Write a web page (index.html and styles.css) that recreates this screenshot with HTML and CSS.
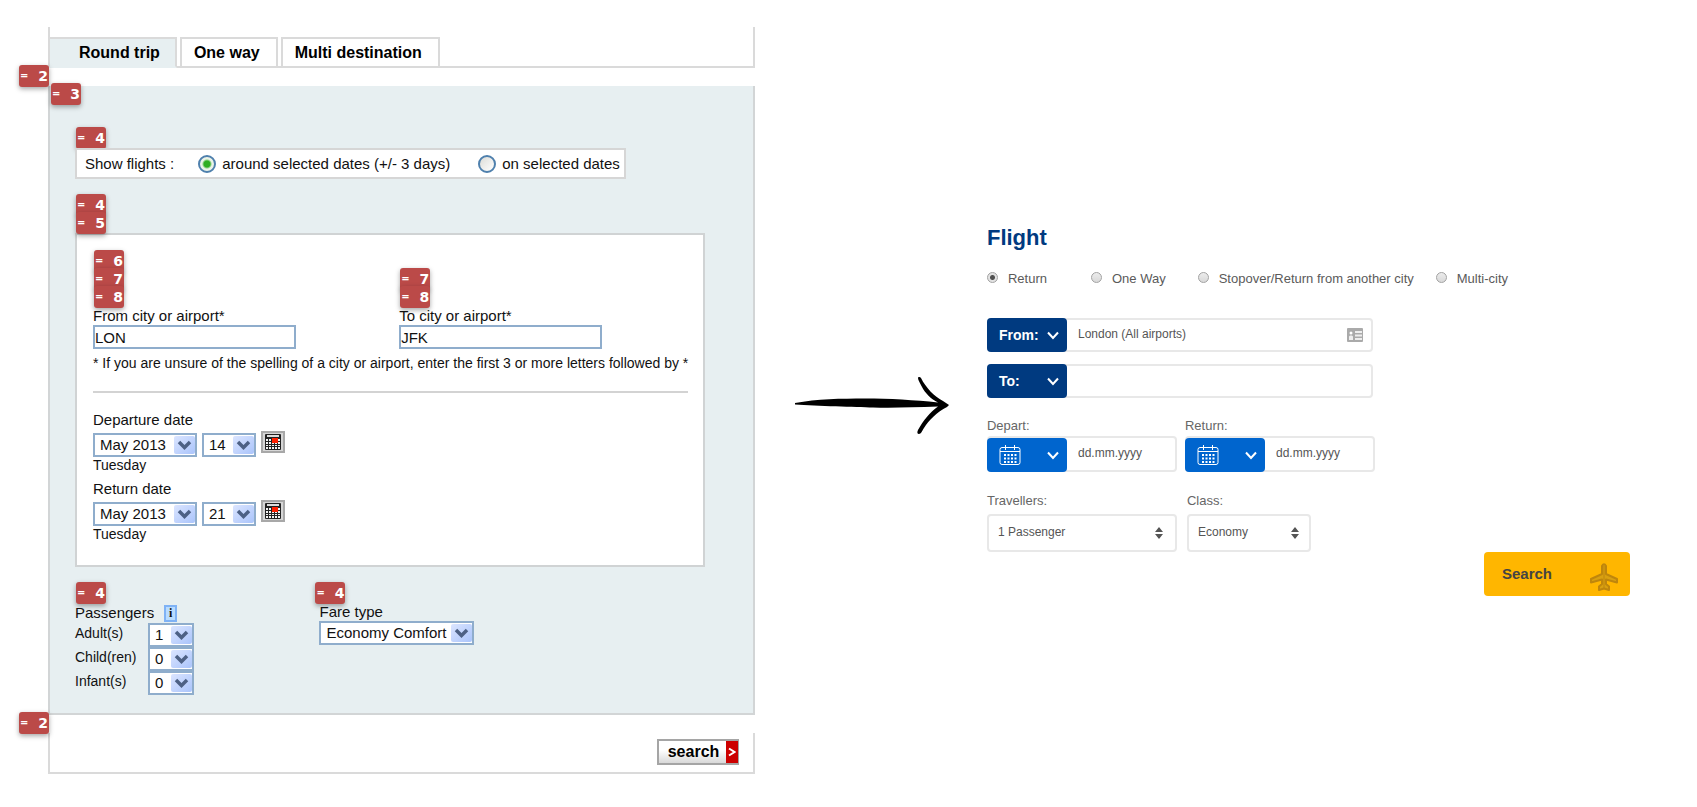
FILE: index.html
```
<!DOCTYPE html>
<html lang="en">
<head>
<meta charset="utf-8">
<title>Flight search forms</title>
<link rel="stylesheet" href="styles.css">
</head>
<body>
<svg class="defs" aria-hidden="true">
  <symbol id="old-cal" viewBox="0 0 18 18">
    <rect x="1" y="1" width="16" height="16" rx="1" fill="#222"/>
    <rect x="3" y="2" width="12" height="2" fill="#ddd"/>
    <g fill="#f4f4f4">
      <path d="M2 6h2v2H2zM5 6h2v2H5zM2 9h2v2H2zM5 9h2v2H5zM8 9h2v2H8zM11 9h2v2h-2zM2 12h2v1H2zM5 12h2v1H5zM8 12h2v1H8zM11 12h2v1h-2zM14 12h2v1h-2zM2 14h2v2H2zM5 14h2v2H5zM8 14h2v2H8zM11 14h2v2h-2zM14 14h2v2h-2zM14 9h2v2h-2zM14 6h2v2h-2z"/>
    </g>
    <rect x="8" y="5" width="6" height="5" fill="#ff2000"/>
  </symbol>
  <symbol id="new-cal" viewBox="0 0 22 22">
    <g fill="none" stroke="#fff" stroke-width="1">
      <rect x="1" y="3.500" width="20" height="17" rx="2"/>
      <path d="M1 7.500h20M6.500 1v5M15.500 1v5"/>
    </g>
    <g stroke="#fff" stroke-width="2" stroke-dasharray="2 1.500">
      <path d="M5 11h13M5 14.500h13M5 18h13"/>
    </g>
  </symbol>
  <symbol id="chevron" viewBox="0 0 12 9">
    <path d="M1 1.500l5 5.500 5-5.500" fill="none" stroke="#fff" stroke-width="2"/>
  </symbol>
</svg>

<main class="page">
  <form class="old">
    <div class="old-head">
      <div class="tabs">
        <button type="button" class="tab tab-on">Round trip</button>
        <button type="button" class="tab">One way</button>
        <button type="button" class="tab">Multi destination</button>
      </div>
    </div>
    <div class="tags tags-out"><span class="tag"><i>=</i><b>2</b></span></div>
    <div class="old-panel">
      <div class="tags"><span class="tag"><i>=</i><b>3</b></span></div>
      <div class="old-body">
        <div class="tags"><span class="tag"><i>=</i><b>4</b></span></div>
        <div class="show" role="radiogroup" aria-label="Show flights">
          <span class="show-title">Show flights :</span>
          <label class="show-opt"><input type="radio" class="xp-radio" name="show" checked><span>around selected dates (+/- 3 days)</span></label>
          <label class="show-opt"><input type="radio" class="xp-radio" name="show"><span>on selected dates</span></label>
        </div>
        <div class="tags second"><span class="tag"><i>=</i><b>4</b></span><span class="tag"><i>=</i><b>5</b></span></div>
        <div class="trip">
          <div class="cities">
            <div class="city">
              <div class="tags"><span class="tag"><i>=</i><b>6</b></span><span class="tag"><i>=</i><b>7</b></span><span class="tag"><i>=</i><b>8</b></span></div>
              <label class="line" for="o-from">From city or airport*</label>
              <input class="xp-input" id="o-from" type="text" value="LON">
            </div>
            <div class="city">
              <div class="tags"><span class="tag"><i>=</i><b>7</b></span><span class="tag"><i>=</i><b>8</b></span></div>
              <label class="line" for="o-to">To city or airport*</label>
              <input class="xp-input" id="o-to" type="text" value="JFK">
            </div>
          </div>
          <p class="hint">* If you are unsure of the spelling of a city or airport, enter the first 3 or more letters followed by *</p>
          <hr class="rule">
          <div class="date">
            <label class="line" for="o-dep">Departure date</label>
            <div class="date-row">
              <select class="xp-select month" id="o-dep"><option>May 2013</option></select>
              <select class="xp-select day" aria-label="Departure day"><option>14</option></select>
              <button type="button" class="cal-btn" aria-label="Pick departure date"><svg class="cal-ico"><use href="#old-cal"/></svg></button>
            </div>
            <div class="weekday">Tuesday</div>
          </div>
          <div class="date">
            <label class="line" for="o-ret">Return date</label>
            <div class="date-row">
              <select class="xp-select month" id="o-ret"><option>May 2013</option></select>
              <select class="xp-select day" aria-label="Return day"><option>21</option></select>
              <button type="button" class="cal-btn" aria-label="Pick return date"><svg class="cal-ico"><use href="#old-cal"/></svg></button>
            </div>
            <div class="weekday">Tuesday</div>
          </div>
        </div>
        <div class="extras">
          <div class="pax">
            <div class="tags"><span class="tag"><i>=</i><b>4</b></span></div>
            <div class="pax-title">Passengers <button type="button" class="info" aria-label="Passenger information">i</button></div>
            <div class="pax-row"><label for="o-ad">Adult(s)</label><select class="xp-select count" id="o-ad"><option>1</option></select></div>
            <div class="pax-row"><label for="o-ch">Child(ren)</label><select class="xp-select count" id="o-ch"><option>0</option></select></div>
            <div class="pax-row"><label for="o-in">Infant(s)</label><select class="xp-select count" id="o-in"><option>0</option></select></div>
          </div>
          <div class="fare">
            <div class="tags"><span class="tag"><i>=</i><b>4</b></span></div>
            <div class="fare-field">
              <label class="line" for="o-fare">Fare type</label>
              <select class="xp-select fare-select" id="o-fare"><option>Economy Comfort</option></select>
            </div>
          </div>
        </div>
      </div>
    </div>
    <div class="tags tags-out"><span class="tag"><i>=</i><b>2</b></span></div>
    <div class="old-foot">
      <button type="button" class="old-search"><span class="old-search-text">search</span><span class="old-search-go"><svg viewBox="0 0 8 10" width="8" height="10" aria-hidden="true"><path d="M1 1.500l5.500 3.500L1 8.500" fill="none" stroke="#fff" stroke-width="2"/></svg></span></button>
    </div>
  </form>

  <svg class="arrow" viewBox="0 0 154 58" aria-hidden="true">
    <path d="M0 26C22 22 46 21.500 70 21.500S120 23 143 25.500C136 22 130 16 127 10 125 6 123 3 123 1 123 0 125-.5 126 1 131 11 139 19 148 24L154 28 152 30C142 35 134 43 129 51 127 54 126 57 124 57 122 57 122 55 123 53 128 44 135 35 143 29.500 118 30.500 95 31 78 30.500S22 29 0 27.500Z"/>
  </svg>

  <form class="new">
    <h1 class="title">Flight</h1>
    <div class="kinds" role="radiogroup" aria-label="Trip type">
      <label class="kind kind-first"><input type="radio" class="mac-radio" name="kind" checked><span>Return</span></label>
      <label class="kind kind-second"><input type="radio" class="mac-radio" name="kind"><span>One Way</span></label>
      <label class="kind kind-third"><input type="radio" class="mac-radio" name="kind"><span>Stopover/Return from another city</span></label>
      <label class="kind"><input type="radio" class="mac-radio" name="kind"><span>Multi-city</span></label>
    </div>
    <div class="place">
      <button type="button" class="place-btn">From: <svg class="chev"><use href="#chevron"/></svg></button>
      <input class="plain" type="text" aria-label="From" value="London (All airports)">
      <svg class="card-ico" viewBox="0 0 16 14" aria-hidden="true">
        <rect width="16" height="14" rx="1" fill="#aaa"/>
        <path d="M2 12V8.500l1-1h2l1 1V12zM8 3h7v2H8zM8 6.500h7v2H8zM8 10h7v2H8z" fill="#eee"/>
        <circle cx="4" cy="5" r="1.500" fill="#fff"/>
      </svg>
    </div>
    <div class="place">
      <button type="button" class="place-btn">To: <svg class="chev"><use href="#chevron"/></svg></button>
      <input class="plain" type="text" aria-label="To">
    </div>
    <div class="pair pair-dates">
      <div class="field">
        <label class="cap" for="n-dep">Depart:</label>
        <div class="when">
          <button type="button" class="when-btn" aria-label="Choose departure"><svg class="new-cal"><use href="#new-cal"/></svg><svg class="chev"><use href="#chevron"/></svg></button>
          <input class="plain" id="n-dep" type="text" placeholder="dd.mm.yyyy">
        </div>
      </div>
      <div class="field">
        <label class="cap" for="n-ret">Return:</label>
        <div class="when">
          <button type="button" class="when-btn" aria-label="Choose return"><svg class="new-cal"><use href="#new-cal"/></svg><svg class="chev"><use href="#chevron"/></svg></button>
          <input class="plain" id="n-ret" type="text" placeholder="dd.mm.yyyy">
        </div>
      </div>
    </div>
    <div class="pair pair-opts">
      <div class="field">
        <label class="cap" for="n-trav">Travellers:</label>
        <select class="mac-select wide" id="n-trav"><option>1 Passenger</option></select>
      </div>
      <div class="field">
        <label class="cap" for="n-class">Class:</label>
        <select class="mac-select" id="n-class"><option>Economy</option></select>
      </div>
    </div>
    <button type="button" class="new-search">Search
      <svg class="plane" viewBox="0 0 28 28" aria-hidden="true">
        <path d="M12 3q2-3.500 4 0v8l11 5v3.500L16 16.500V21l3 2.500V27l-5-1.500L9 27v-3.500l3-2.500v-4.500L1 19.500V16l11-5z" fill="#d9a010" stroke="#bf860c" stroke-width="2" stroke-linejoin="round"/>
        <path d="M14 3v22" stroke="#bf860c" stroke-width="1"/>
      </svg>
    </button>
  </form>
</main>
</body>
</html>
```

FILE: styles.css
```
* { box-sizing: border-box; }

body {
  margin: 0;
  background: #fff;
  color: #111;
  font-family: "Liberation Sans", Arial, sans-serif;
  font-size: 15px;
  line-height: 18px;
}

button, input, select {
  font: inherit;
  color: inherit;
  margin: 0;
}

.defs { position: absolute; width: 0; height: 0; }

.page {
  display: grid;
  grid-template-columns: 706fr 230fr 646fr;
  align-items: start;
  padding: 27px 67px 32px 48px;
}

/* Numbered tags */
.tags { display: flex; flex-direction: column; align-items: flex-start; }
.tags-out { margin-left: -30px; }
.tags.second { margin-top: 18px; }
.tag {
  display: flex;
  justify-content: space-between;
  align-items: center;
  width: 30px;
  height: 22px;
  margin: -3px 0 -1px 1px;
  padding: 0 1px;
  border-radius: 3px;
  background: #bb4a48;
  box-shadow: 0 2px 5px rgba(0, 0, 0, .35);
  color: #fff;
  font-family: "DejaVu Sans", sans-serif;
}
.tag i { font-style: normal; font-weight: bold; font-size: 10px; }
.tag b { font-size: 14px; }

/* Classic form */
.old-head {
  padding-top: 10px;
  border: solid #dadada;
  border-width: 0 2px 2px;
}
.tabs { display: flex; gap: 3px; margin: 0 0 -2px -2px; }
.tab {
  padding: 5px 16px 5px 12px;
  height: 31px;
  border: 2px solid #dadada;
  background: #fff;
  color: #000;
  font-size: 16px;
  font-weight: bold;
}
.tab-on { padding-left: 29px; padding-right: 15px; background: #e7eff1; border-bottom-color: #e7eff1; }

.old-panel {
  background: #e7eff1;
  border: solid #d2d5d6;
  border-width: 0 2px 2px;
}
.old-body { padding: 26px 48px 18px 25px; }

.show {
  display: inline-flex;
  align-items: center;
  height: 31px;
  padding: 0 4px 0 8px;
  border: 2px solid #d6d6d6;
  background: #fff;
}
.show-title { margin-right: 24px; }
.show-opt { display: flex; align-items: center; gap: 6px; }
.show-opt + .show-opt { margin-left: 28px; }
.xp-radio {
  appearance: none;
  width: 18px;
  height: 18px;
  border: 2px solid #4f80ad;
  border-radius: 50%;
  background: linear-gradient(135deg, #dcdcd7, #fff);
}
.xp-radio:checked {
  background: radial-gradient(circle, #2fae22 0 3px, #e9f3e6 5px, #f4f4f0);
}

.trip {
  padding: 18px 15px 22px 16px;
  border: 2px solid #d0d3d4;
  background: #fff;
}
.cities { display: grid; grid-template-columns: 306fr 289fr; align-items: end; }
.city { display: flex; flex-direction: column; }
.line { display: block; height: 18px; }
.xp-input {
  width: 100%;
  max-width: 203px;
  height: 24px;
  padding: 0;
  border: 2px solid #8fadcc;
  background: #fff;
}
.hint { margin: 5px 0 19px; font-size: 14px; white-space: nowrap; }
.rule { margin: 0 0 18px; border: 0; border-top: 2px solid #d3d3d3; }
.date + .date { margin-top: 6px; }
.date-row { display: flex; align-items: flex-end; gap: 5px; margin-top: 2px; }
.weekday { font-size: 14px; line-height: 17px; }

.xp-select {
  appearance: none;
  height: 24px;
  padding: 0 0 0 5px;
  border: 2px solid #8fadcc;
  border-radius: 0;
  background: #fff url("data:image/svg+xml,%3Csvg xmlns='http://www.w3.org/2000/svg' width='21' height='18'%3E%3Cdefs%3E%3ClinearGradient id='g' x2='1' y2='1'%3E%3Cstop stop-color='%23dbe5ff'/%3E%3Cstop offset='1' stop-color='%23aac4fb'/%3E%3C/linearGradient%3E%3C/defs%3E%3Crect width='21' height='18' rx='2' fill='url(%23g)'/%3E%3Cpath d='M5 6l5.500 5.500L16 6' fill='none' stroke='%234d6185' stroke-width='3.500'/%3E%3C/svg%3E") no-repeat right center;
}
.month { width: 104px; }
.day { width: 54px; }
.count { width: 46px; }
.fare-select { display: block; width: 155px; }

.cal-btn {
  display: flex;
  align-items: center;
  justify-content: center;
  width: 24px;
  height: 22px;
  margin-bottom: 4px;
  padding: 0;
  border: 2px solid #a8a8a8;
  background: #d6d6d6;
}
.cal-ico { width: 18px; height: 18px; }

.extras { display: grid; grid-template-columns: 239fr 390fr; margin-top: 18px; align-items: start; }
.pax-title { display: flex; align-items: center; gap: 10px; height: 20px; }
.info {
  width: 13px;
  height: 17px;
  padding: 0;
  border: 2px solid #7fb2f5;
  background: #b9dcff;
  color: #111;
  font: bold 12px/12px "Liberation Serif", serif;
}
.pax-row { display: grid; grid-template-columns: 73px auto; justify-content: start; height: 24px; }
.pax-row label { font-size: 14px; line-height: 20px; }
.fare-field { padding-left: 5px; }

.old-foot {
  display: flex;
  justify-content: flex-end;
  padding: 6px 14px 7px;
  border: solid #dadada;
  border-width: 0 2px 2px;
}
.old-search {
  display: flex;
  height: 26px;
  padding: 0;
  border: 2px solid #a5a5a5;
  border-right-width: 1px;
  background: linear-gradient(#fff 40%, #d9d9d9);
  color: #000;
  font-size: 16px;
  font-weight: bold;
}
.old-search-text { padding: 2px 7px 2px 9px; }
.old-search-go { display: flex; align-items: center; padding: 0 2px; align-self: stretch; background: #c00; }

.arrow { width: 154px; height: 58px; margin: 350px 0 0 40px; overflow: visible; }

/* Modern form */
.new {
  display: flex;
  flex-direction: column;
  padding: 198px 0 0 2px;
  color: #5a5a5a;
  font-size: 13px;
}
.title { margin: 0 0 18px; color: #003a80; font-size: 22px; line-height: 26px; }
.kinds { display: flex; margin-bottom: 29px; height: 20px; }
.kind { display: flex; gap: 10px; line-height: 20px; }
.kind-first { margin-right: 44px; }
.kind-second { margin-right: 32px; }
.kind-third { margin-right: 22px; }
.mac-radio {
  appearance: none;
  width: 11px;
  height: 11px;
  margin-top: 3px;
  border: 1px solid #a2a2a2;
  border-radius: 50%;
  background: linear-gradient(#ececec, #d8d8d8);
}
.mac-radio:checked { background: radial-gradient(circle, #505050 0 2px, #e2e2e2 3px); }

.place, .when {
  display: flex;
  align-items: center;
  height: 34px;
  border: 2px solid #e8e8e8;
  border-radius: 4px;
}
.when { height: 36px; }
.place { width: 100%; max-width: 386px; margin-bottom: 12px; }
.place-btn, .when-btn {
  display: flex;
  justify-content: space-between;
  align-items: center;
  flex: none;
  width: 80px;
  height: 34px;
  margin: -2px 0 -2px -2px;
  padding: 0 8px 0 12px;
  border: 0;
  border-radius: 4px;
  background: #003a80;
  color: #fff;
  font-size: 14px;
  font-weight: bold;
}
.chev { width: 12px; height: 9px; }
.when-btn { margin-top: 0; background: #0065ce; }
.new-cal { width: 22px; height: 22px; }
.plain {
  flex: 1;
  min-width: 0;
  height: 28px;
  padding: 0 11px 2px;
  border: 0;
  background: transparent;
  color: #555;
  font-size: 12px;
}
.plain::placeholder { color: #555; opacity: 1; }
.card-ico { flex: none; width: 16px; height: 14px; margin-right: 8px; }

.pair { display: flex; }
.cap { display: block; height: 18px; color: #666; }
.pair-dates { gap: 8px; margin: 7px 0 20px; }
.pair-dates .field { flex: 0 1 190px; min-width: 0; }
.pair-dates .cap { margin-bottom: 1px; }
.pair-opts { gap: 10px; }
.pair-opts .cap { margin-bottom: 4px; }
.mac-select {
  appearance: none;
  width: 124px;
  height: 38px;
  padding: 0 0 2px 9px;
  border: 2px solid #e8e8e8;
  border-radius: 4px;
  background: #fff url("data:image/svg+xml,%3Csvg xmlns='http://www.w3.org/2000/svg' width='8' height='12'%3E%3Cpath d='M0 5l4-5 4 5zM0 7l4 5 4-5z' fill='%23555'/%3E%3C/svg%3E") no-repeat right 10px center;
  color: #555;
  font-size: 12px;
}
.wide { width: 190px; background-position: right 12px center; }

.new-search {
  display: flex;
  justify-content: space-between;
  align-items: center;
  align-self: flex-end;
  width: 146px;
  height: 44px;
  padding: 0 12px 0 18px;
  border: 0;
  border-radius: 4px;
  background: #ffb600;
  color: #444;
  font-size: 15px;
  font-weight: bold;
}
.plane { width: 28px; height: 28px; margin-top: 5px; }
```
